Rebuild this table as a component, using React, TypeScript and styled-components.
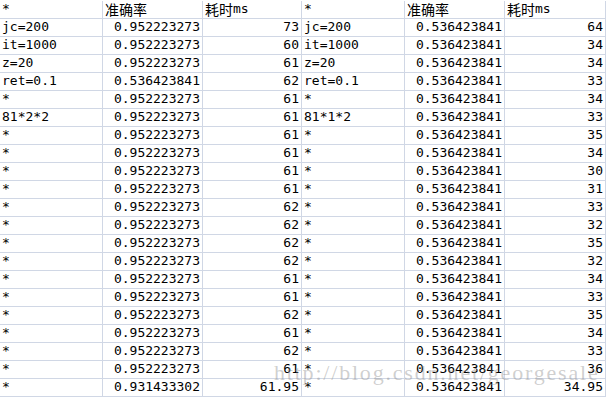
import styled, { createGlobalStyle } from "styled-components";

const GlobalStyle = createGlobalStyle`
  html, body {
    margin: 0;
    padding: 0;
    background: #ffffff;
  }
`;

const Sheet = styled.div`
  position: relative;
  width: 607px;
  height: 397px;
  overflow: hidden;
  padding-top: 1px;
  box-sizing: border-box;
  background: #ffffff;
`;

const Grid = styled.div`
  display: grid;
  grid-template-columns: 103px 100px 99px 103px 100px 101px;
  grid-auto-rows: 18px;
  font-family: "DejaVu Sans Mono", "Noto Sans CJK SC", monospace;
  font-size: 13px;
  color: #000;
`;

const Cell = styled.div<{ $align?: "left" | "right" }>`
  box-sizing: border-box;
  border-right: 1px solid #d0d7e5;
  border-bottom: 1px solid #d0d7e5;
  display: flex;
  align-items: flex-end;
  justify-content: ${(p) => (p.$align === "right" ? "flex-end" : "flex-start")};
  padding: 0 2px 1px 2px;
  line-height: 16px;
  white-space: nowrap;
`;

const Cjk = styled.span`
  font-family: "Noto Sans CJK SC", sans-serif;
  font-size: 14px;
  line-height: 16px;
`;

const Watermark = styled.div`
  position: absolute;
  left: 274px;
  top: 360px;
  width: 320px;
  font-family: "Liberation Serif", serif;
  font-size: 22px;
  line-height: 26px;
  letter-spacing: 1.8px;
  color: rgba(140, 140, 140, 0.42);
  pointer-events: none;
  white-space: nowrap;
`;

type Row = [string, string, string];

const left: Row[] = [
  ["jc=200", "0.952223273", "73"],
  ["it=1000", "0.952223273", "60"],
  ["z=20", "0.952223273", "61"],
  ["ret=0.1", "0.536423841", "62"],
  ["*", "0.952223273", "61"],
  ["81*2*2", "0.952223273", "61"],
  ["*", "0.952223273", "61"],
  ["*", "0.952223273", "61"],
  ["*", "0.952223273", "61"],
  ["*", "0.952223273", "61"],
  ["*", "0.952223273", "62"],
  ["*", "0.952223273", "62"],
  ["*", "0.952223273", "62"],
  ["*", "0.952223273", "62"],
  ["*", "0.952223273", "61"],
  ["*", "0.952223273", "61"],
  ["*", "0.952223273", "62"],
  ["*", "0.952223273", "61"],
  ["*", "0.952223273", "62"],
  ["*", "0.952223273", "61"],
  ["*", "0.931433302", "61.95"],
];

const rightMs = [
  "64", "34", "34", "33", "34", "33", "35", "34", "30", "31", "33",
  "32", "35", "32", "34", "33", "35", "34", "33", "36", "34.95",
];

const rightLabels = ["jc=200", "it=1000", "z=20", "ret=0.1", "*", "81*1*2"];

const right: Row[] = rightMs.map((ms, i) => [
  rightLabels[i] ?? "*",
  "0.536423841",
  ms,
]);

function Header() {
  return (
    <>
      <Cell>*</Cell>
      <Cell>
        <Cjk>准确率</Cjk>
      </Cell>
      <Cell>
        <Cjk>耗时</Cjk>ms
      </Cell>
    </>
  );
}

function Block({ row }: { row: Row }) {
  return (
    <>
      <Cell>{row[0]}</Cell>
      <Cell $align="right">{row[1]}</Cell>
      <Cell $align="right">{row[2]}</Cell>
    </>
  );
}

export default function App() {
  return (
    <>
      <GlobalStyle />
      <Sheet>
        <Grid>
          <Header />
          <Header />
          {left.map((row, i) => (
            <>
              <Block key={`l${i}`} row={row} />
              <Block key={`r${i}`} row={right[i]} />
            </>
          ))}
        </Grid>
        <Watermark>http://blog.csdn.net/georgesale</Watermark>
      </Sheet>
    </>
  );
}
